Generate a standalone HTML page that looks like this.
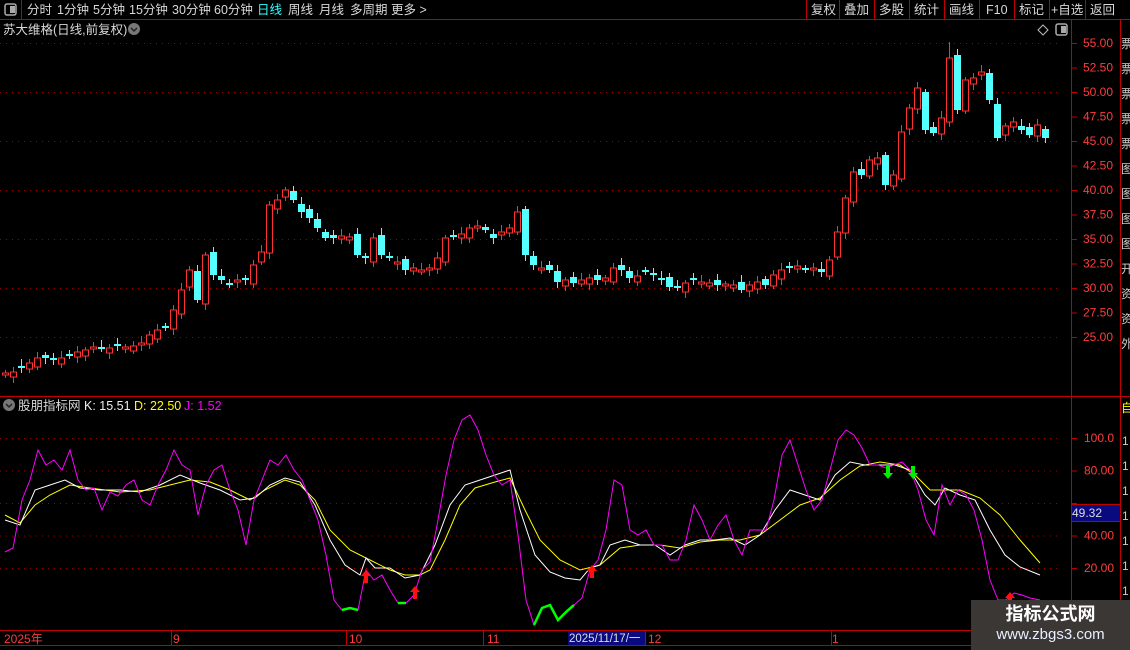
<!DOCTYPE html>
<html><head><meta charset="utf-8">
<style>
html,body{margin:0;padding:0;background:#000;width:1130px;height:650px;overflow:hidden;font-family:"Liberation Sans","Noto Sans CJK SC",sans-serif;}
svg{position:absolute;left:0;top:0}
.wm{position:absolute;left:971px;top:600px;width:159px;height:50px;background:#3b3735;color:#fff;text-align:center}
</style></head><body>
<svg id="s" width="1130" height="650" xmlns="http://www.w3.org/2000/svg" font-family="Liberation Sans, Noto Sans CJK SC, sans-serif">
<rect x="0" y="0" width="1130" height="19" fill="#000"/>
<line x1="0" y1="19.5" x2="1130" y2="19.5" stroke="#c00000"/>
<line x1="21.5" y1="0" x2="21.5" y2="19" stroke="#c00000"/>
<rect x="5" y="4" width="11" height="11" rx="2" fill="none" stroke="#aaa" stroke-width="1.5"/>
<rect x="10" y="6" width="5" height="7" fill="#aaa"/>
<g font-size="12.5" fill="#d8d8d8">
<text x="27" y="14">分时</text><text x="57" y="14">1分钟</text><text x="93" y="14">5分钟</text><text x="129" y="14">15分钟</text><text x="172" y="14">30分钟</text><text x="214" y="14">60分钟</text>
<text x="257" y="14" fill="#3ff">日线</text><text x="288" y="14">周线</text><text x="319" y="14">月线</text><text x="350" y="14">多周期</text><text x="391" y="14">更多 &gt;</text>
</g>
<g stroke="#c00000"><line x1="806.5" y1="0" x2="806.5" y2="19"/><line x1="839.5" y1="0" x2="839.5" y2="19"/><line x1="874.5" y1="0" x2="874.5" y2="19"/><line x1="909.5" y1="0" x2="909.5" y2="19"/><line x1="944.5" y1="0" x2="944.5" y2="19"/><line x1="979.5" y1="0" x2="979.5" y2="19"/><line x1="1014.5" y1="0" x2="1014.5" y2="19"/><line x1="1049.5" y1="0" x2="1049.5" y2="19"/><line x1="1085.5" y1="0" x2="1085.5" y2="19"/></g>
<g font-size="12.5" fill="#d8d8d8">
<text x="811" y="14">复权</text><text x="844" y="14">叠加</text><text x="879" y="14">多股</text><text x="914" y="14">统计</text><text x="949" y="14">画线</text><text x="986" y="14">F10</text><text x="1019" y="14">标记</text><text x="1051" y="14">+自选</text><text x="1090" y="14">返回</text>
</g>
<text x="3" y="34" font-size="12.5" fill="#d8d8d8">苏大维格(日线,前复权)</text>
<circle cx="134" cy="29" r="6" fill="#777"/><path d="M131 28l3 3 3-3" stroke="#222" stroke-width="1.5" fill="none"/>
<path d="M1043 25l5 5-5 5-5-5z" fill="none" stroke="#bbb"/>
<rect x="1056" y="24" width="11" height="11" rx="2" fill="none" stroke="#aaa" stroke-width="1.5"/><rect x="1061" y="26" width="5" height="7" fill="#aaa"/>
<line x1="1071.5" y1="20" x2="1071.5" y2="646" stroke="#c00000"/>
<line x1="1120.5" y1="20" x2="1120.5" y2="646" stroke="#c00000"/>
<line x1="0" y1="396.5" x2="1130" y2="396.5" stroke="#c00000"/>
<line x1="0" y1="630.5" x2="1071" y2="630.5" stroke="#c00000"/>
<line x1="0" y1="645.5" x2="1071" y2="645.5" stroke="#c00000"/>
<rect x="1072" y="504" width="48" height="17" fill="#0a0a80"/>
<line x1="1071" y1="504.5" x2="1120" y2="504.5" stroke="#c00000"/><line x1="1071" y1="521.5" x2="1120" y2="521.5" stroke="#c00000"/>
<text x="1072" y="517" font-size="12" fill="#ddd">49.32</text>
<g id="g"></g>
<circle cx="9" cy="405" r="6" fill="#777"/><path d="M6 404l3 3 3-3" stroke="#222" stroke-width="1.5" fill="none"/>
<text x="18" y="410" font-size="12.5" fill="#d8d8d8">股朋指标网</text>
<text x="84" y="410" font-size="12.5" fill="#eee">K: 15.51</text>
<text x="134" y="410" font-size="12.5" fill="#ff0">D: 22.50</text>
<text x="184" y="410" font-size="12.5" fill="#f0f">J: 1.52</text>
<rect x="568" y="631" width="77" height="14" fill="#0a0a80"/>
<g font-size="12" fill="#ff3c3c">
<text x="4" y="643">2025年</text><text x="173" y="643">9</text><text x="349" y="643">10</text><text x="487" y="643">11</text><text x="648" y="643">12</text><text x="832" y="643">1</text>
</g>
<text x="569" y="642" font-size="11.5" fill="#ddd">2025/11/17/一</text>
<g stroke="#c00000"><line x1="171.5" y1="631" x2="171.5" y2="645"/><line x1="346.5" y1="631" x2="346.5" y2="645"/><line x1="483.5" y1="631" x2="483.5" y2="645"/><line x1="645.5" y1="631" x2="645.5" y2="645"/><line x1="831.5" y1="631" x2="831.5" y2="645"/></g>
</svg>
<div class="wm"><div style="font-size:18px;font-weight:bold;margin-top:2px;line-height:24px">指标公式网</div><div style="font-size:15px;line-height:18px;color:#e8f0ff">www.zbgs3.com</div></div>
<script>
(function(){
var g=document.getElementById('g'),h='';
function L(x1,y1,x2,y2,c,w,d){h+='<line x1="'+x1+'" y1="'+y1+'" x2="'+x2+'" y2="'+y2+'" stroke="'+c+'" stroke-width="'+(w||1)+'"'+(d?' stroke-dasharray="'+d+'"':'')+'/>';}
function T(x,y,t,c){h+='<text x="'+x+'" y="'+y+'" font-size="12" fill="'+c+'">'+t+'</text>';}
var pl=['55.00','52.50','50.00','47.50','45.00','42.50','40.00','37.50','35.00','32.50','30.00','27.50','25.00'];
for(var i=0;i<13;i++){var y=43+i*24.5;if(i%2==0)L(0,y+0.5,1060,y+0.5,'#a00000',1,'1 5');L(1071,y+0.5,1077,y+0.5,'#c00000');T(1083,y+4,pl[i],'#ff3c3c');}
var il=['100.0','80.00','60.00','40.00','20.00'];
for(var i=0;i<5;i++){var y=438+i*32.5;L(0,y+0.5,1060,y+0.5,'#a00000',1,'1 5');L(1071,y+0.5,1077,y+0.5,'#c00000');if(i!=2)T(1084,y+4,il[i],'#ff3c3c');}
var c=[373,372,368,363,358,358,360,358,356,352,350,347,349,348,346,347,346,343,335,330,328,310,290,270,300,255,275,280,285,280,280,265,252,205,200,190,200,212,218,228,238,238,236,237,255,258,238,255,258,262,270,268,270,268,258,238,237,234,228,226,230,238,232,228,212,255,265,268,270,282,280,283,280,278,280,278,268,270,278,276,272,275,280,287,288,283,280,282,283,285,284,285,290,285,282,285,275,270,268,266,270,268,272,260,232,198,172,175,160,158,185,175,132,108,88,130,133,118,58,110,80,78,72,100,138,126,122,130,135,125,138];
var prev=375;
for(var i=0;i<c.length;i++){var x=5+i*8,o=prev,cl=c[i];if(Math.abs(o-cl)<2){o=cl+(i%2?2:-2);}
var isUp=cl<o,col=isUp?'#ff3232':'#54ffff',top=Math.min(o,cl),bot=Math.max(o,cl);
var hi=top-3-(i*7%5),lo=bot+3+(i*3%4);if(i==118)hi=42;
L(x+0.5,hi,x+0.5,lo,col);
if(isUp)h+='<rect x="'+(x-2.5)+'" y="'+top+'" width="6" height="'+(bot-top)+'" fill="#000" stroke="'+col+'"/>';
else h+='<rect x="'+(x-3)+'" y="'+top+'" width="7" height="'+(bot-top)+'" fill="'+col+'"/>';
prev=cl+(i%3==0?4:(i%3==1?-3:1));}
function P(pts,col,w){h+='<polyline fill="none" stroke="'+col+'" stroke-width="'+(w||1)+'" points="'+pts+'"/>';}
var J="5,552 13,548 22,500 30,480 38,450 46,465 54,460 62,470 70,450 78,480 86,490 94,488 102,510 110,492 118,496 126,485 134,480 142,500 150,505 158,485 166,470 174,450 182,465 190,470 198,515 206,485 214,470 222,465 230,490 238,510 246,545 254,500 262,480 270,460 278,465 286,455 294,470 302,480 310,500 318,520 326,555 334,600 342,610 350,608 358,610 366,570 374,580 382,575 390,590 398,603 406,603 414,595 422,570 430,562 438,520 446,475 454,440 462,420 470,415 478,430 486,455 494,475 502,485 510,480 518,535 526,600 534,625 542,608 550,605 558,620 566,612 574,605 582,598 590,570 598,560 606,530 614,480 622,485 630,530 638,535 646,530 654,545 662,545 670,560 678,560 686,540 694,505 702,520 710,540 718,525 726,515 734,540 742,555 750,530 758,530 766,530 774,500 782,455 790,440 798,465 806,490 814,510 822,500 830,470 838,440 846,430 854,435 862,448 870,465 878,465 886,468 894,465 902,462 910,470 918,490 926,520 934,535 942,485 950,505 958,490 966,495 974,510 982,540 990,580 998,600 1006,600 1014,593 1022,595 1030,598 1040,600";
var K="5,520 20,525 35,490 50,485 65,480 80,488 100,490 120,490 140,492 160,485 180,475 200,483 220,490 240,500 255,498 270,485 285,478 300,482 315,505 330,540 345,565 360,575 366,558 375,568 390,568 405,578 420,575 435,545 450,505 465,485 480,480 495,475 510,470 520,510 535,555 550,572 565,578 580,580 590,568 600,565 610,545 625,540 640,545 655,545 670,555 685,545 700,540 715,540 730,538 745,545 760,535 775,510 790,490 805,495 820,500 835,475 850,462 865,465 880,465 895,465 910,470 925,495 935,505 945,488 960,495 975,500 990,530 1005,555 1020,567 1040,575";
var D="5,515 20,523 35,505 50,495 70,485 90,488 120,492 150,490 170,485 190,480 210,482 230,490 250,500 265,490 285,480 300,485 315,500 330,530 350,550 370,560 390,570 405,575 420,575 430,570 445,540 460,505 475,488 495,482 510,478 525,510 540,540 560,560 580,570 600,565 620,548 640,545 660,545 680,548 700,542 720,540 740,540 760,535 780,520 800,505 820,498 840,480 860,466 880,462 900,465 915,475 930,490 945,490 960,490 980,498 1000,515 1020,540 1040,563";
P(D,'#ffff00');P(K,'#ffffff');P(J,'#ff00ff');
P("342,610 350,608 358,610",'#00ff00',2.5);P("398,603 406,603",'#00ff00',2.5);P("534,625 542,608 550,605 558,620 566,612 574,605",'#00ff00',2.5);
function arUp(x,y){h+='<path d="M'+x+' '+y+'l-5 6h3v7h4v-7h3z" fill="#ff1010"/>';}
function arDn(x,y){h+='<path d="M'+x+' '+y+'l-5 -6h3v-7h4v7h3z" fill="#00ee00"/>';}
arUp(366,570);arUp(415,586);arUp(592,565);arUp(1010,592);arDn(888,479);arDn(913,479);
var sc='票票票票票图图图图开资资外';
for(var i=0;i<13;i++){h+='<text x="1121" y="'+(48+i*25)+'" font-size="12" fill="#ccc">'+sc.charAt(i)+'</text>';}
h+='<text x="1121" y="412" font-size="12" fill="#ff0">自</text>';
for(var i=0;i<7;i++)h+='<text x="1122" y="'+(445+i*25)+'" font-size="12" fill="#ccc">1</text>';
g.innerHTML=h;
})();
</script>
</body></html>
